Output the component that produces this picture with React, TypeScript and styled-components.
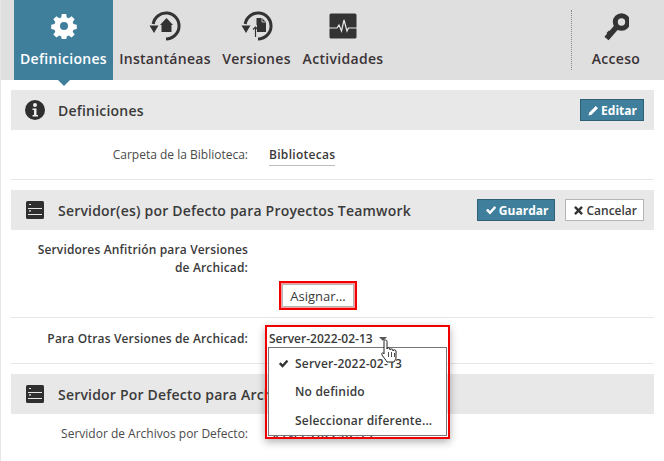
import type { ReactNode } from "react";
import styled, { createGlobalStyle } from "styled-components";

const Global = createGlobalStyle`
	html, body {
		margin: 0;
		padding: 0;
		background: #fff;
		overflow: hidden;
	}
	body {
		font-family: "Open Sans", "Liberation Sans", sans-serif;
		color: #3a3a3a;
	}
`;

const Page = styled.div`
	width: 664px;
	height: 461px;
	position: relative;
	overflow: hidden;
	box-sizing: border-box;
	border-left: 1px solid #e6e6e6;
`;

const Toolbar = styled.div`
	height: 80px;
	margin-left: -1px;
	background: #dfdfdf;
	display: flex;
	padding: 0 4px 0 14px;
`;

const Tab = styled.div<{ $active?: boolean; $w: number }>`
	width: ${(p) => p.$w}px;
	position: relative;
	display: flex;
	flex-direction: column;
	align-items: center;
	background: ${(p) => (p.$active ? "#3f7f9c" : "transparent")};
	color: ${(p) => (p.$active ? "#fff" : "#3a3336")};
	font-size: 14px;
	font-weight: 600;
	letter-spacing: 0.3px;
	white-space: nowrap;
	${(p) =>
		p.$active &&
		`&::after {
			content: "";
			position: absolute;
			left: 50%;
			bottom: -6px;
			margin-left: -6px;
			border-left: 6px solid transparent;
			border-right: 6px solid transparent;
			border-top: 6px solid #3f7f9c;
		}`}
`;

const TabIcon = styled.div`
	height: 50px;
	display: flex;
	align-items: center;
	justify-content: center;
	padding-top: 2px;
	box-sizing: border-box;
`;

const TabLabel = styled.span`
	line-height: 18px;
`;

const Spacer = styled.div`
	flex: 1;
`;

const Separator = styled.div`
	width: 0;
	margin: 10px 0;
	border-left: 1px dotted #8a8a8a;
`;

const Content = styled.div`
	padding: 10px 10px 0;
`;

const SectionHeader = styled.div`
	height: 40px;
	background: #e8e8e8;
	display: flex;
	align-items: center;
	padding: 0 10px 0 13px;
	gap: 12px;
`;

const IconSlot = styled.div`
	width: 22px;
	height: 22px;
	display: flex;
	align-items: center;
	justify-content: center;
`;

const SectionTitle = styled.div`
	flex: 1;
	font-size: 14px;
	font-weight: 600;
	letter-spacing: 0.2px;
	color: #3a3a3a;
	white-space: nowrap;
	overflow: hidden;
`;

const ButtonGroup = styled.div`
	display: flex;
	gap: 10px;
`;

const ActionButton = styled.div<{ $primary?: boolean }>`
	height: 22px;
	box-sizing: border-box;
	display: flex;
	align-items: center;
	gap: 2px;
	padding: 0 6px 0 7px;
	font-size: 12px;
	font-weight: ${(p) => (p.$primary ? 700 : 600)};
	background: ${(p) => (p.$primary ? "#3f7f9c" : "#fff")};
	color: ${(p) => (p.$primary ? "#fff" : "#3a3a3a")};
	border: 1px solid ${(p) => (p.$primary ? "#2f6078" : "#b5b5b5")};
`;

const Row = styled.div<{ $h: number; $pb?: number }>`
	display: grid;
	grid-template-columns: 237px 1fr;
	column-gap: 21px;
	align-items: center;
	height: ${(p) => p.$h}px;
	box-sizing: border-box;
	padding-bottom: ${(p) => p.$pb ?? 0}px;
	font-size: 12px;
`;

const Label = styled.div<{ $bold?: boolean }>`
	text-align: right;
	font-weight: ${(p) => (p.$bold ? 600 : 400)};
	letter-spacing: ${(p) => (p.$bold ? "0.15px" : "0")};
	color: ${(p) => (p.$bold ? "#3a3a3a" : "#4a4a4a")};
	line-height: 18px;
`;

const Value = styled.span`
	font-weight: 600;
	letter-spacing: 0.3px;
	color: #3a3a3a;
	border-bottom: 1px solid #bcbcbc;
	padding-bottom: 2px;
	white-space: nowrap;
`;

const Divider = styled.div<{ $mb: number }>`
	height: 1px;
	background: #e6e6e6;
	margin-bottom: ${(p) => p.$mb}px;
`;

const HostBlock = styled.div`
	padding-top: 11px;
	height: 87px;
	box-sizing: border-box;
`;

const HostLabel = styled(Label)`
	width: 237px;
	font-size: 12px;
`;

const AssignRow = styled.div`
	display: flex;
	padding-left: 268px;
	margin-top: 4px;
`;

const Highlight = styled.div`
	border: 2px solid #f00000;
	padding: 1px;
	box-shadow: inset 0 0 0 1px #ff9a9a;
`;

const AssignButton = styled.div`
	width: 72px;
	height: 23px;
	box-sizing: border-box;
	border: 1px solid #b5b5b5;
	background: #fff;
	display: flex;
	align-items: center;
	justify-content: center;
	font-size: 13px;
	color: #3a3a3a;
`;

const Caret = styled.span`
	display: inline-block;
	margin-left: 6px;
	vertical-align: 2px;
	border-left: 4px solid transparent;
	border-right: 4px solid transparent;
	border-top: 4px solid #555;
`;

const PlainValue = styled.span`
	font-weight: 600;
	color: #3a3a3a;
	white-space: nowrap;
`;

const DropdownHighlight = styled.div`
	position: absolute;
	left: 264px;
	top: 325px;
	width: 181px;
	height: 110px;
	border: 2px solid #f00000;
	box-shadow: 0 3px 8px rgba(0, 0, 0, 0.3);
`;

const Menu = styled.div`
	position: absolute;
	left: 1px;
	top: 20px;
	width: 179px;
	height: 89px;
	box-sizing: border-box;
	background: #fff;
	border: 1px solid #777;
	display: flex;
	flex-direction: column;
	padding-top: 1px;
`;

const MenuItem = styled.div`
	height: 28.5px;
	display: flex;
	align-items: center;
	padding-left: 9px;
	gap: 6px;
	font-size: 12px;
	font-weight: 600;
	letter-spacing: 0.2px;
	color: #3a3a3a;
	white-space: nowrap;
`;

const CheckSlot = styled.div`
	width: 11px;
	display: flex;
`;

const Cursor = styled.svg`
	position: absolute;
	left: 379px;
	top: 339px;
`;

const Gear = () => (
	<svg width="26" height="26" viewBox="0 0 26 26">
		<path
			fill="#fff"
			fillRule="evenodd"
			d="M10.8 1h4.4l.6 3.4 2 .8 2.8-2 3.1 3.1-2 2.8.8 2 3.3.6v4.400l-3.300.6-.8 2 2 2.800-3.100 3.100-2.800-2-2 .8-.6 3.300h-4.400l-.6-3.300-2-.8-2.800 2-3.100-3.100 2-2.800-.8-2-3.300-.6v-4.400l3.300-.6.8-2-2-2.800 3.100-3.100 2.800 2 2-.8z M13 9a4 4 0 1 0 0 8 4 4 0 0 0 0-8z"
		/>
	</svg>
);

const HistoryRing = ({ children }: { children: ReactNode }) => (
	<svg width="34" height="34" viewBox="0 0 34 34">
		<path d="M5.200 15A13 13 0 1 1 18 30" fill="none" stroke="#333" strokeWidth="3" />
		<path d="M1.500 16.500h9l-4.500 7.500z" fill="#333" />
		{children}
	</svg>
);

const HomeHistory = () => (
	<HistoryRing>
		<path d="M18.500 9l6.500 7h-1.500v7h-10v-7H12z" fill="#333" />
	</HistoryRing>
);

const FileHistory = () => (
	<HistoryRing>
		<path d="M16.500 9h5.500l4 4v10H17v-7h-.5z" fill="#333" />
		<path d="M22 9v4h4" fill="none" stroke="#dfdfdf" strokeWidth="0.8" />
		<path d="M15.500 28V18M13 20.500l2.500-2.500 2.500 2.500" fill="none" stroke="#333" strokeWidth="1.200" />
	</HistoryRing>
);

const Pulse = () => (
	<svg width="28" height="26" viewBox="0 0 28 26">
		<rect x="0.500" y="0.500" width="27" height="25" rx="1.500" fill="#333" />
		<path
			d="M0 15h8l2-3 2.500 6 2.500-11 3 11 1.500-3H28"
			fill="none"
			stroke="#e8e8e8"
			strokeWidth="1.200"
		/>
	</svg>
);

const Key = () => (
	<svg width="26" height="30" viewBox="0 0 26 30">
		<circle cx="18.500" cy="11" r="6.200" fill="none" stroke="#333" strokeWidth="5" />
		<path d="M14 15.500L3.500 27.500" fill="none" stroke="#333" strokeWidth="5.500" />
		<path d="M6 19.500l4 4-2.500 2.500-4-4z" fill="#333" />
	</svg>
);

const Info = () => (
	<svg width="20" height="20" viewBox="0 0 20 20">
		<circle cx="10" cy="10" r="10" fill="#2f2f2f" />
		<circle cx="10" cy="5" r="2" fill="#eee" />
		<path d="M7.500 8.500h4v6.500h1.500v1.500H7.500V15h1.500v-5H7.500z" fill="#eee" />
	</svg>
);

const ServerIcon = () => (
	<svg width="18" height="18" viewBox="0 0 18 18">
		<rect width="18" height="18" rx="1.500" fill="#2f2f2f" />
		<path d="M2 7.500h14M2 13.500h14" stroke="#e8e8e8" strokeWidth="1.200" />
		<path d="M3 3.500h2M3 9.800h2" stroke="#e8e8e8" strokeWidth="1.200" />
	</svg>
);

const Pencil = () => (
	<svg width="11" height="11" viewBox="0 0 11 11">
		<path d="M0.500 10.500l0.800-3L7.800 1l2.200 2.200L3.500 9.700z" fill="#fff" />
	</svg>
);

const Check = ({ color, size }: { color: string; size: number }) => (
	<svg width={size} height={size} viewBox="0 0 12 12">
		<path d="M1 6.500l1.800-1.800 2.200 2.200L9.500 2 11.200 3.800 5 10.500z" fill={color} />
	</svg>
);

const Cross = () => (
	<svg width="11" height="11" viewBox="0 0 10 10">
		<path d="M1 2.500L2.500 1 5 3.500 7.500 1 9 2.500 6.500 5 9 7.500 7.500 9 5 6.500 2.500 9 1 7.500 3.500 5z" fill="#333" />
	</svg>
);

const Hand = () => (
	<Cursor width="20" height="26" viewBox="0 0 20 26">
		<path
			d="M4 2.500c0-2 3-2 3 0V10c0-1.500 3-1.500 3 0v1c0-1.500 3-1.500 3 0v1c0-1.500 3-1.500 3 0v6c0 2-1 3-2 5H7c-1-2-3-4-5-7-1-2 1-3 2-1z"
			fill="#fff"
			stroke="#222"
			strokeWidth="1"
		/>
		<path d="M8.500 13v5M11.500 13v5M14.500 14v4" stroke="#222" strokeWidth="0.800" />
	</Cursor>
);

const App = () => {
	return (
		<>
			<Global />
			<Page>
				<Toolbar>
					<Tab $active $w={99}>
						<TabIcon><Gear /></TabIcon>
						<TabLabel>Definiciones</TabLabel>
					</Tab>
					<Tab $w={104}>
						<TabIcon><HomeHistory /></TabIcon>
						<TabLabel>Instantáneas</TabLabel>
					</Tab>
					<Tab $w={79}>
						<TabIcon><FileHistory /></TabIcon>
						<TabLabel>Versiones</TabLabel>
					</Tab>
					<Tab $w={94}>
						<TabIcon><Pulse /></TabIcon>
						<TabLabel>Actividades</TabLabel>
					</Tab>
					<Spacer />
					<Separator />
					<Tab $w={88}>
						<TabIcon><Key /></TabIcon>
						<TabLabel>Acceso</TabLabel>
					</Tab>
				</Toolbar>
				<Content>
					<SectionHeader>
						<IconSlot><Info /></IconSlot>
						<SectionTitle>Definiciones</SectionTitle>
						<ActionButton $primary><Pencil />Editar</ActionButton>
					</SectionHeader>
					<Row $h={49}>
						<Label>Carpeta de la Biblioteca:</Label>
						<div><Value>Bibliotecas</Value></div>
					</Row>
					<Divider $mb={10} />
					<SectionHeader>
						<IconSlot><ServerIcon /></IconSlot>
						<SectionTitle>Servidor(es) por Defecto para Proyectos Teamwork</SectionTitle>
						<ButtonGroup>
							<ActionButton $primary><Check color="#fff" size={12} />Guardar</ActionButton>
							<ActionButton><Cross />Cancelar</ActionButton>
						</ButtonGroup>
					</SectionHeader>
					<HostBlock>
						<HostLabel $bold>Servidores Anfitrión para Versiones<br />de Archicad:</HostLabel>
						<AssignRow>
							<Highlight>
								<AssignButton>Asignar...</AssignButton>
							</Highlight>
						</AssignRow>
					</HostBlock>
					<Divider $mb={0} />
					<Row $h={45} $pb={4}>
						<Label $bold>Para Otras Versiones de Archicad:</Label>
						<div><PlainValue>Server-2022-02-13<Caret /></PlainValue></div>
					</Row>
					<Divider $mb={10} />
					<SectionHeader>
						<IconSlot><ServerIcon /></IconSlot>
						<SectionTitle>Servidor Por Defecto para Archicad</SectionTitle>
					</SectionHeader>
					<Row $h={40}>
						<Label>Servidor de Archivos por Defecto:</Label>
						<div><PlainValue>Server-2022-02-13</PlainValue></div>
					</Row>
				</Content>
				<DropdownHighlight>
					<Menu>
						<MenuItem>
							<CheckSlot><Check color="#333" size={11} /></CheckSlot>
							Server-2022-02-13
						</MenuItem>
						<MenuItem>
							<CheckSlot />
							No definido
						</MenuItem>
						<MenuItem>
							<CheckSlot />
							Seleccionar diferente...
						</MenuItem>
					</Menu>
				</DropdownHighlight>
				<Hand />
			</Page>
		</>
	);
};

export default App;
